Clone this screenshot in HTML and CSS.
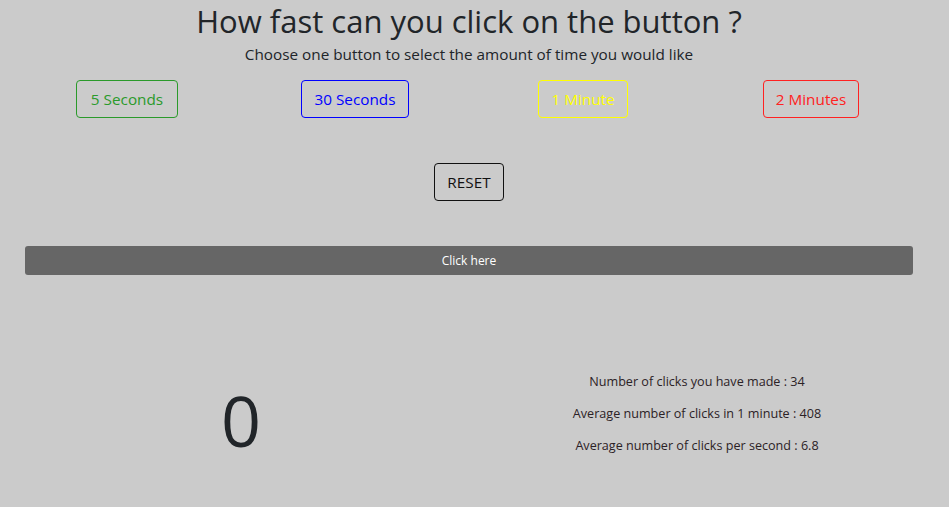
FILE: index.html
```html
<!DOCTYPE html>
<html lang="en">
<head>
<meta charset="utf-8">
<title>How fast can you click on the button ?</title>
<link rel="stylesheet" href="styles.css">
</head>
<body>
<main class="page">
  <h1 class="title">How fast can you click on the button ?</h1>
  <p class="subtitle">Choose one button to select the amount of time you would like</p>
  <div class="choices">
    <div class="choice"><button class="btn btn-green">5 Seconds</button></div>
    <div class="choice"><button class="btn btn-blue">30 Seconds</button></div>
    <div class="choice"><button class="btn btn-yellow">1 Minute</button></div>
    <div class="choice"><button class="btn btn-red">2 Minutes</button></div>
  </div>
  <div class="reset-row"><button class="btn btn-reset">RESET</button></div>
  <button class="click-bar">Click here</button>
  <div class="results">
    <div class="timer">0</div>
    <div class="stats">
      <p>Number of clicks you have made : 34</p>
      <p>Average number of clicks in 1 minute : 408</p>
      <p>Average number of clicks per second : 6.8</p>
    </div>
  </div>
</main>
</body>
</html>
```

FILE: styles.css
```css
html, body {
  margin: 0;
  padding: 0;
  background: #cbcbcb;
}
body {
  font-family: "Open Sans", "Noto Sans", sans-serif;
  color: #212529;
}
.page {
  width: 938px;
}
.title {
  margin: 0;
  padding-top: 2px;
  text-align: center;
  font-weight: 400;
  font-size: 31px;
  line-height: 38px;
}
.subtitle {
  margin: 3px 0 0;
  text-align: center;
  font-size: 15.3px;
  line-height: 22px;
}
.choices {
  display: grid;
  grid-template-columns: repeat(4, 1fr);
  padding: 0 13px;
  margin-top: 15px;
}
.choice {
  display: flex;
  justify-content: center;
}
.btn {
  font-family: inherit;
  font-size: 15.3px;
  line-height: 24px;
  padding: 6px 12px;
  background: transparent;
  border: 1px solid;
  border-radius: 4px;
  height: 38px;
}
.btn-green { color: #2a9a2a; border-color: #2a9a2a; padding: 6px 14px; }
.btn-blue { color: #0000ff; border-color: #0000ff; }
.btn-yellow { color: #ffff00; border-color: #ffff00; }
.btn-red { color: #ff2121; border-color: #ff2121; }
.reset-row {
  display: flex;
  justify-content: center;
  margin-top: 45px;
}
.btn-reset {
  color: #111;
  border-color: #111;
  width: 70px;
  padding: 6px 0;
}
.click-bar {
  display: block;
  box-sizing: border-box;
  width: 888px;
  height: 29px;
  margin: 45px 0 0 25px;
  background: #666666;
  color: #ffffff;
  border: 0;
  border-radius: 3px;
  font-family: inherit;
  font-size: 12px;
}
.results {
  display: grid;
  grid-template-columns: 1fr 1fr;
  padding: 0 13px;
  margin-top: 91px;
  align-items: center;
}
.timer {
  text-align: center;
  font-size: 70px;
  line-height: 80px;
  padding-top: 11px;
}
.stats {
  text-align: center;
  font-size: 12.6px;
  color: #2b2226;
}
.stats p {
  margin: 0;
  line-height: 32px;
}
```
